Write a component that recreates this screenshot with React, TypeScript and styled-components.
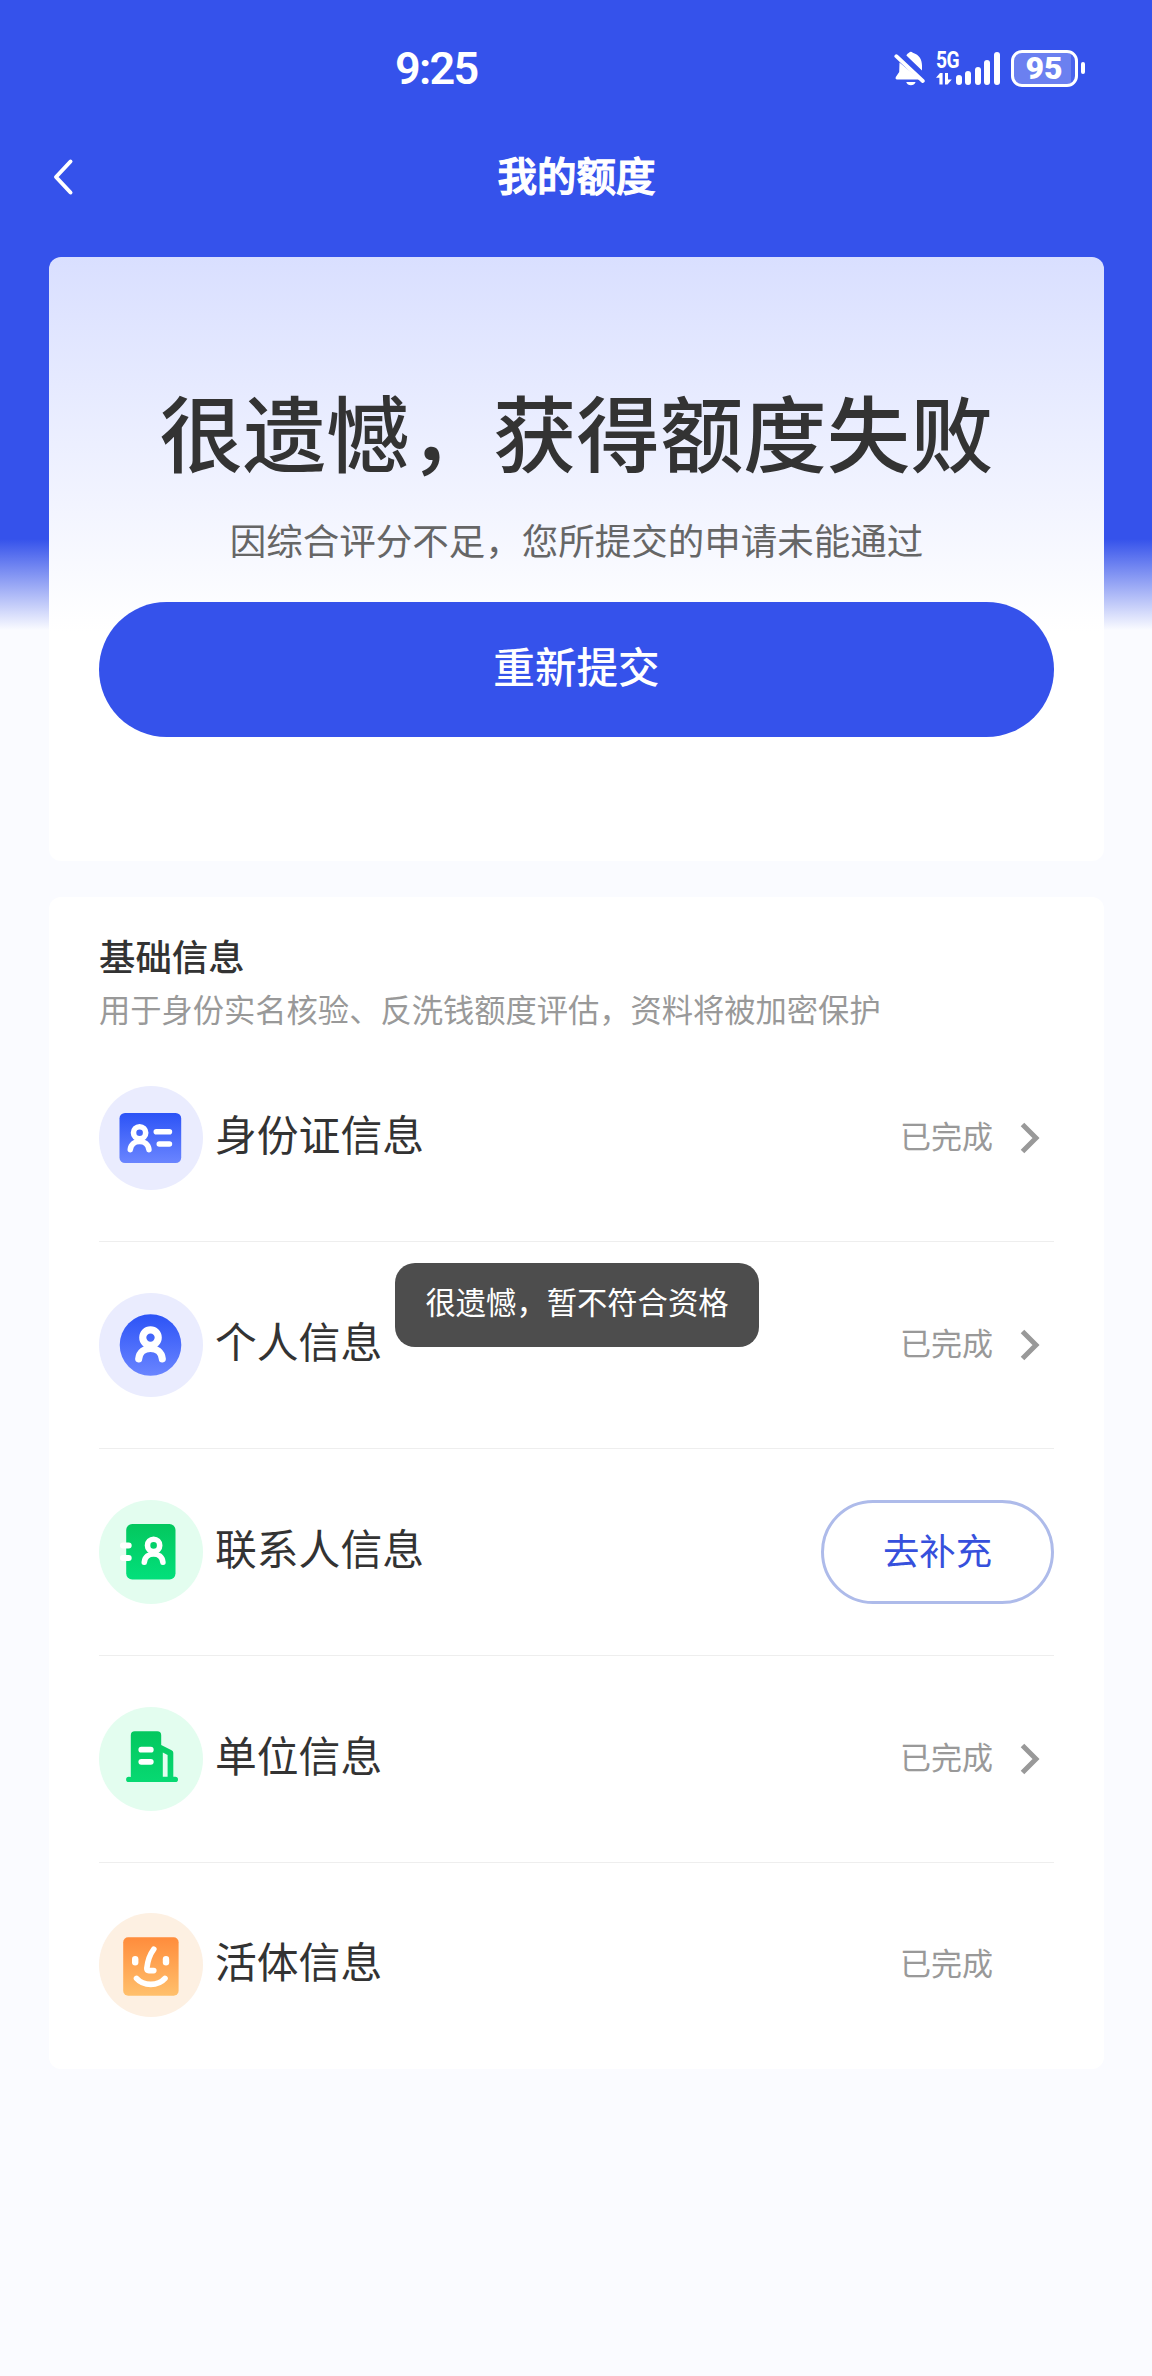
import React from "react";
import styled, { createGlobalStyle } from "styled-components";

const BLUE = "#3552eb";

const GlobalStyle = createGlobalStyle`
  * { box-sizing: border-box; }
  body {
    margin: 0;
    background: #fafbff;
    font-family: "Noto Sans CJK SC", "Noto Sans", sans-serif;
    color: #333;
  }
  button { font-family: inherit; cursor: pointer; }
`;

const Page = styled.div`
  position: relative;
  width: 1152px;
  height: 2376px;
  overflow: hidden;
  background: linear-gradient(180deg, ${BLUE} 0, ${BLUE} 539px, #fafbff 630px);
`;

const StatusBar = styled.div`
  display: flex;
  justify-content: space-between;
  align-items: center;
  height: 112px;
  padding: 24px 67px 0 395px;
  color: #fff;
`;

const Clock = styled.div`
  padding-top: 2px;
  font: 600 45px/52px Roboto, sans-serif;
  letter-spacing: -1.7px;
`;

const StatusIcons = styled.div`
  display: flex;
  align-items: center;
`;

const Network = styled.div`
  display: flex;
  align-items: flex-end;
  height: 36px;
  margin-left: 10px;
`;

const NetworkType = styled.div`
  display: flex;
  flex-direction: column;
  width: 20px;
  height: 36px;
`;

const NetworkLabel = styled.span`
  height: 23px;
  font: 700 24px/20px Roboto, sans-serif;
  letter-spacing: -0.5px;
  transform: scaleX(0.8);
  transform-origin: left;
`;

const Bars = styled.div`
  display: flex;
  align-items: flex-end;
  gap: 3.5px;
  padding-bottom: 1px;
`;

const Bar = styled.span<{ $h: number }>`
  width: 6px;
  height: ${(p) => p.$h}px;
  border-radius: 3px;
  background: #fff;
`;

const Battery = styled.div`
  display: flex;
  align-items: center;
  gap: 3px;
  margin-left: 11px;
`;

const BatteryBody = styled.div`
  display: flex;
  align-items: center;
  justify-content: center;
  width: 67px;
  height: 37px;
  border: 3px solid #fff;
  border-radius: 11px;
  background: linear-gradient(90deg, #6b80f0 94%, #4a64ed 94%);
  font: 900 32px/31px Roboto, sans-serif;
`;

const BatteryTip = styled.span`
  width: 4.5px;
  height: 12px;
  border-radius: 2px;
  background: #fff;
`;

const NavBar = styled.header`
  display: grid;
  grid-template-columns: 100px 1fr 100px;
  align-items: center;
  height: 145px;
  padding-bottom: 16px;
  color: #fff;
`;

const BackButton = styled.button`
  display: flex;
  padding: 0 0 0 51px;
  border: 0;
  background: none;
`;

const NavTitle = styled.h1`
  margin: 0;
  padding: 0 0 5px 1px;
  text-align: center;
  font-size: 39.5px;
  line-height: 60px;
  font-weight: 500;
  -webkit-text-stroke: 1.2px #fff;
  stroke-linejoin: round;
`;

const Content = styled.main`
  display: flex;
  flex-direction: column;
  gap: 36px;
  padding: 0 48px 0 49px;
`;

const ResultCard = styled.section`
  display: flex;
  flex-direction: column;
  height: 604px;
  padding: 123px 50px 0;
  border-radius: 12px;
  background: linear-gradient(180deg, #d9dfff 0, #fff 375px);
  text-align: center;
`;

const ResultTitle = styled.h2`
  display: flex;
  justify-content: center;
  margin: 0;
  font-size: 83.4px;
  line-height: 100px;
  font-weight: 500;
  white-space: nowrap;
`;

const ResultReason = styled.p`
  margin: 35px 0 37px;
  font-size: 36.5px;
  line-height: 50px;
  color: #666;
`;

const SubmitButton = styled.button`
  height: 135px;
  padding: 0 0 9px;
  border: 0;
  border-radius: 68px;
  background: ${BLUE};
  color: #fff;
  font-size: 41.6px;
  font-weight: 500;
`;

const InfoCard = styled.section`
  height: 1172px;
  padding: 33px 50px 0;
  border-radius: 12px;
  background: #fff;
`;

const InfoHead = styled.div`
  height: 105.5px;
`;

const InfoTitle = styled.h3`
  margin: 0;
  font-size: 36.4px;
  line-height: 50px;
  font-weight: 500;
`;

const InfoNote = styled.p`
  margin: 6px 0 0;
  font-size: 31.28px;
  line-height: 46px;
  color: #999;
`;

const Row = styled.div`
  display: flex;
  align-items: center;
  height: 206.8px;
  border-bottom: 1.5px solid #eee;
  &:last-child { border-bottom: 0; height: 205px; }
`;

const RowLabel = styled.span`
  flex: 1;
  margin-left: 12px;
  padding-bottom: 10px;
  font-size: 41.8px;
  line-height: 60px;
`;

const Status = styled.span`
  padding-bottom: 6px;
  font-size: 31px;
  line-height: 46px;
  color: #999;
`;

const Arrow = styled.span`
  display: flex;
  justify-content: flex-end;
  width: 61px;
  padding-right: 13px;
`;

const FillButton = styled.button`
  width: 233px;
  height: 104px;
  padding: 0 0 6px;
  border: 3px solid #aebbea;
  border-radius: 52px;
  background: #fff;
  color: #3650dc;
  font-size: 36.4px;
`;

const Toast = styled.div`
  position: absolute;
  top: 1263px;
  left: 395px;
  width: 364px;
  height: 84px;
  border-radius: 20px;
  background: #4d4d4d;
  color: #fff;
  font-size: 30.3px;
  line-height: 76px;
  text-align: center;
  white-space: nowrap;
`;

const Person = ({ x, y, s = 1 }: { x: number; y: number; s?: number }) => (
  <g transform={`translate(${x} ${y}) scale(${s})`} fill="none" stroke="#fff" strokeWidth="5.6" strokeLinecap="round">
    <circle cx="0" cy="0" r="6.1" />
    <path d="M-9.300 16.800C-8.300 5.800 8.300 5.800 9.300 16.800" />
  </g>
);

const Fill = ({ id, from, to }: { id: string; from: string; to: string }) => (
  <defs>
    <linearGradient id={id} x1="0" y1="0" x2="0" y2="1">
      <stop offset="0" stopColor={from} />
      <stop offset="1" stopColor={to} />
    </linearGradient>
  </defs>
);

const Badge = ({ tint, children }: { tint: string; children: React.ReactNode }) => (
  <svg width="104" height="104" viewBox="0 0 104 104">
    <circle cx="52" cy="52" r="52" fill={tint} />
    {children}
  </svg>
);

const IdIcon = () => (
  <Badge tint="#eaecfe">
    <Fill id="gid" from="#2c53f6" to="#6a85ff" />
    <rect x="20.5" y="27" width="61.7" height="50" rx="5.5" fill="url(#gid)" />
    <Person x={40.6} y={46.8} />
    <path d="M57.3 45.8H70.4M60.3 58H70.4" stroke="#fff" strokeWidth="5.6" strokeLinecap="round" />
  </Badge>
);

const PersonalIcon = () => (
  <Badge tint="#eaecfe">
    <Fill id="gpe" from="#2c53f6" to="#6a85ff" />
    <circle cx="51.5" cy="52" r="30.8" fill="url(#gpe)" />
    <Person x={51.5} y={44.6} s={1.27} />
  </Badge>
);

const ContactIcon = () => (
  <Badge tint="#e3fdef">
    <Fill id="gco" from="#04c75e" to="#02e07b" />
    <rect x="27.2" y="24" width="49.3" height="55.4" rx="6" fill="url(#gco)" />
    <path d="M24 45.6H29.700M24 58H29.700" stroke="#fff" strokeWidth="6" strokeLinecap="round" />
    <Person x={54.6} y={45.4} />
  </Badge>
);

const CompanyIcon = () => (
  <Badge tint="#e3fdef">
    <Fill id="gcm" from="#04c75e" to="#07d972" />
    <path
      d="M31.8 70V28.3a4 4 0 0 1 4-4h22.4a4 4 0 0 1 4 4V38l10.4 5.2a3 3 0 0 1 1.7 2.8V69.7h2a2.7 2.7 0 0 1 0 5.4H29.8a2.7 2.7 0 0 1 0-5.4zM63.8 45.5V69.7h4.8V48z"
      fillRule="evenodd"
      fill="url(#gcm)"
    />
    <path d="M42.3 42.7H51.8M42.3 54.8H51.8" stroke="#fff" strokeWidth="5.8" strokeLinecap="round" />
  </Badge>
);

const FaceIcon = () => (
  <Badge tint="#fdf0e2">
    <Fill id="gfa" from="#ff8c3c" to="#ffc06c" />
    <rect x="24.2" y="24.2" width="55.4" height="58.6" rx="5" fill="url(#gfa)" />
    <rect x="33" y="43" width="6.4" height="9.4" rx="3.2" fill="#fff" />
    <rect x="63.8" y="43" width="6.4" height="9.4" rx="3.2" fill="#fff" />
    <path
      d="M54.800 36.200C50.500 42 48.500 49 47.800 55.400Q47.600 57.600 49.800 57.600H54.800M37.5 65.4C44.5 73.4 59 73.4 66 65.4"
      fill="none"
      stroke="#fff"
      strokeWidth="5.6"
      strokeLinecap="round"
      strokeLinejoin="round"
    />
  </Badge>
);

const BellOff = () => (
  <svg width="32" height="36" viewBox="0 0 32 36" fill="#fff">
    <path d="M5.5 12.5L26 29.5H2.6q-1.8-.6-.8-2.4L5.2 22zM12.4 5.5C13 4 14 3.2 15 2.8Q16.8.6 18.8 2.8C25.5 4.8 28 10 28 15.500V20.500z" />
    <path d="M12.2 32H21.600Q20.300 35.200 16.900 35.200T12.200 32z" />
    <path d="M2.300 6.200L28.800 31" stroke="#fff" strokeWidth="3.800" strokeLinecap="round" />
  </svg>
);

const DataArrows = () => (
  <svg width="16" height="12" viewBox="0 0 16 12" fill="#fff">
    <path d="M4 0H6.600V11.500H3.400V4.800H0zM9 0H12V6.500H15.800L11.500 11.500H9z" />
  </svg>
);

const rows = [
  { label: "身份证信息", icon: <IdIcon />, done: true, arrow: true },
  { label: "个人信息", icon: <PersonalIcon />, done: true, arrow: true },
  { label: "联系人信息", icon: <ContactIcon />, done: false, arrow: false },
  { label: "单位信息", icon: <CompanyIcon />, done: true, arrow: true },
  { label: "活体信息", icon: <FaceIcon />, done: true, arrow: false },
];

export default function App() {
  return (
    <Page>
      <GlobalStyle />
      <StatusBar>
        <Clock>9:25</Clock>
        <StatusIcons>
          <BellOff />
          <Network>
            <NetworkType>
              <NetworkLabel>5G</NetworkLabel>
              <DataArrows />
            </NetworkType>
            <Bars>
              {[10, 14, 18, 25, 33].map((h) => (
                <Bar key={h} $h={h} />
              ))}
            </Bars>
          </Network>
          <Battery>
            <BatteryBody>95</BatteryBody>
            <BatteryTip />
          </Battery>
        </StatusIcons>
      </StatusBar>
      <NavBar>
        <BackButton aria-label="返回">
          <svg width="24" height="38" viewBox="0 0 24 38" fill="none" stroke="#fff" strokeWidth="4" strokeLinecap="round" strokeLinejoin="round">
            <path d="M19.500 3.500L5 19L19.500 34.500" />
          </svg>
        </BackButton>
        <NavTitle>我的额度</NavTitle>
      </NavBar>
      <Content>
        <ResultCard>
          <ResultTitle>很遗憾，获得额度失败</ResultTitle>
          <ResultReason>因综合评分不足，您所提交的申请未能通过</ResultReason>
          <SubmitButton>重新提交</SubmitButton>
        </ResultCard>
        <InfoCard>
          <InfoHead>
            <InfoTitle>基础信息</InfoTitle>
            <InfoNote>用于身份实名核验、反洗钱额度评估，资料将被加密保护</InfoNote>
          </InfoHead>
          {rows.map((r) => (
            <Row key={r.label}>
              {r.icon}
              <RowLabel>{r.label}</RowLabel>
              {r.done ? (
                <>
                  <Status>已完成</Status>
                  <Arrow>
                    {r.arrow && (
                      <svg width="22" height="32" viewBox="0 0 22 32" fill="none" stroke="#999" strokeWidth="5">
                        <path d="M3.500 2.500L17 16L3.500 29.500" />
                      </svg>
                    )}
                  </Arrow>
                </>
              ) : (
                <FillButton>去补充</FillButton>
              )}
            </Row>
          ))}
        </InfoCard>
      </Content>
      <Toast>很遗憾，暂不符合资格</Toast>
    </Page>
  );
}
